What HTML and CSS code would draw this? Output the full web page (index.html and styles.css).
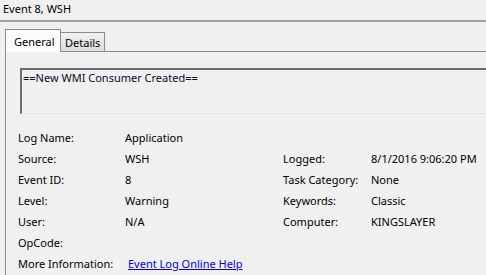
FILE: index.html
```html
<!DOCTYPE html>
<html lang="en">
<head>
    <meta charset="UTF-8">
    <title>Event 8, WSH</title>
    <link rel="stylesheet" href="styles.css">
</head>
<body>

    <div class="title-bar">Event 8, WSH</div>

    <div class="tabs">
        <div class="tab active">General</div>
        <div class="tab">Details</div>
    </div>

    <div class="panel">
        <!-- Event description -->
        <div class="description">==New WMI Consumer Created==</div>

        <div class="props">
            <span class="label">Log Name:</span>
            <span class="value wide">Application</span>

            <span class="label">Source:</span>
            <span class="value">WSH</span>
            <span class="label">Logged:</span>
            <span class="value">8/1/2016 9:06:20 PM</span>

            <span class="label">Event ID:</span>
            <span class="value">8</span>
            <span class="label">Task Category:</span>
            <span class="value">None</span>

            <span class="label">Level:</span>
            <span class="value">Warning</span>
            <span class="label">Keywords:</span>
            <span class="value">Classic</span>

            <span class="label">User:</span>
            <span class="value">N/A</span>
            <span class="label">Computer:</span>
            <span class="value">KINGSLAYER</span>

            <span class="label">OpCode:</span>
            <span class="value wide"></span>

            <span class="label">More Information:</span>
            <span class="value wide"><a href="#" class="link">Event Log Online Help</a></span>
        </div>
    </div>

</body>
</html>
```

FILE: styles.css
```css
html, body {
    height: 100%;
}

body {
    margin: 0;
    display: flex;
    flex-direction: column;
    background-color: #f0f0f0;
    font-family: "Noto Sans", "Open Sans", sans-serif;
    font-size: 11px;
    color: #000;
    overflow: hidden;
}

.title-bar {
    height: 17px;
    line-height: 17px;
    padding: 0 0 3px 3px;
    border-bottom: 2px solid #a0a0a0;
}

/* Tabs */
.tabs {
    display: flex;
    align-items: flex-end;
    margin-top: 6px;
    padding-left: 5px;
}

.tab {
    box-sizing: border-box;
    width: 45px;
    height: 19px;
    line-height: 19px;
    padding-left: 4px;
    border: 1px solid #898c95;
    border-bottom: none;
    background: linear-gradient(#f2f2f2, #dcdcdc);
    white-space: nowrap;
}

.tab.active {
    width: 56px;
    height: 23px;
    line-height: 24px;
    padding-left: 8px;
    margin-right: -1px;
    background: #fbfbfb;
    position: relative;
    top: 1px;
    z-index: 1;
}

/* Tab page */
.panel {
    flex: 1;
    margin-left: 5px;
    border-top: 1px solid #898c95;
    border-left: 1px solid #898c95;
    padding: 16px 0 0 14px;
}

.description {
    height: 43px;
    line-height: 16px;
    padding-left: 1px;
    border-top: 2px solid #6e6e6e;
    border-left: 2px solid #6e6e6e;
    border-bottom: 1px solid #e3e3e3;
    color: #0a0a2a;
}

.props {
    display: grid;
    grid-template-columns: 107px 158px 88px auto;
    grid-auto-rows: 21px;
    line-height: 21px;
    margin: 13px 0 0 -2px;
}

.value.wide {
    grid-column: span 3;
}

.link {
    color: #0000ee;
    margin-left: 3px;
}
```
